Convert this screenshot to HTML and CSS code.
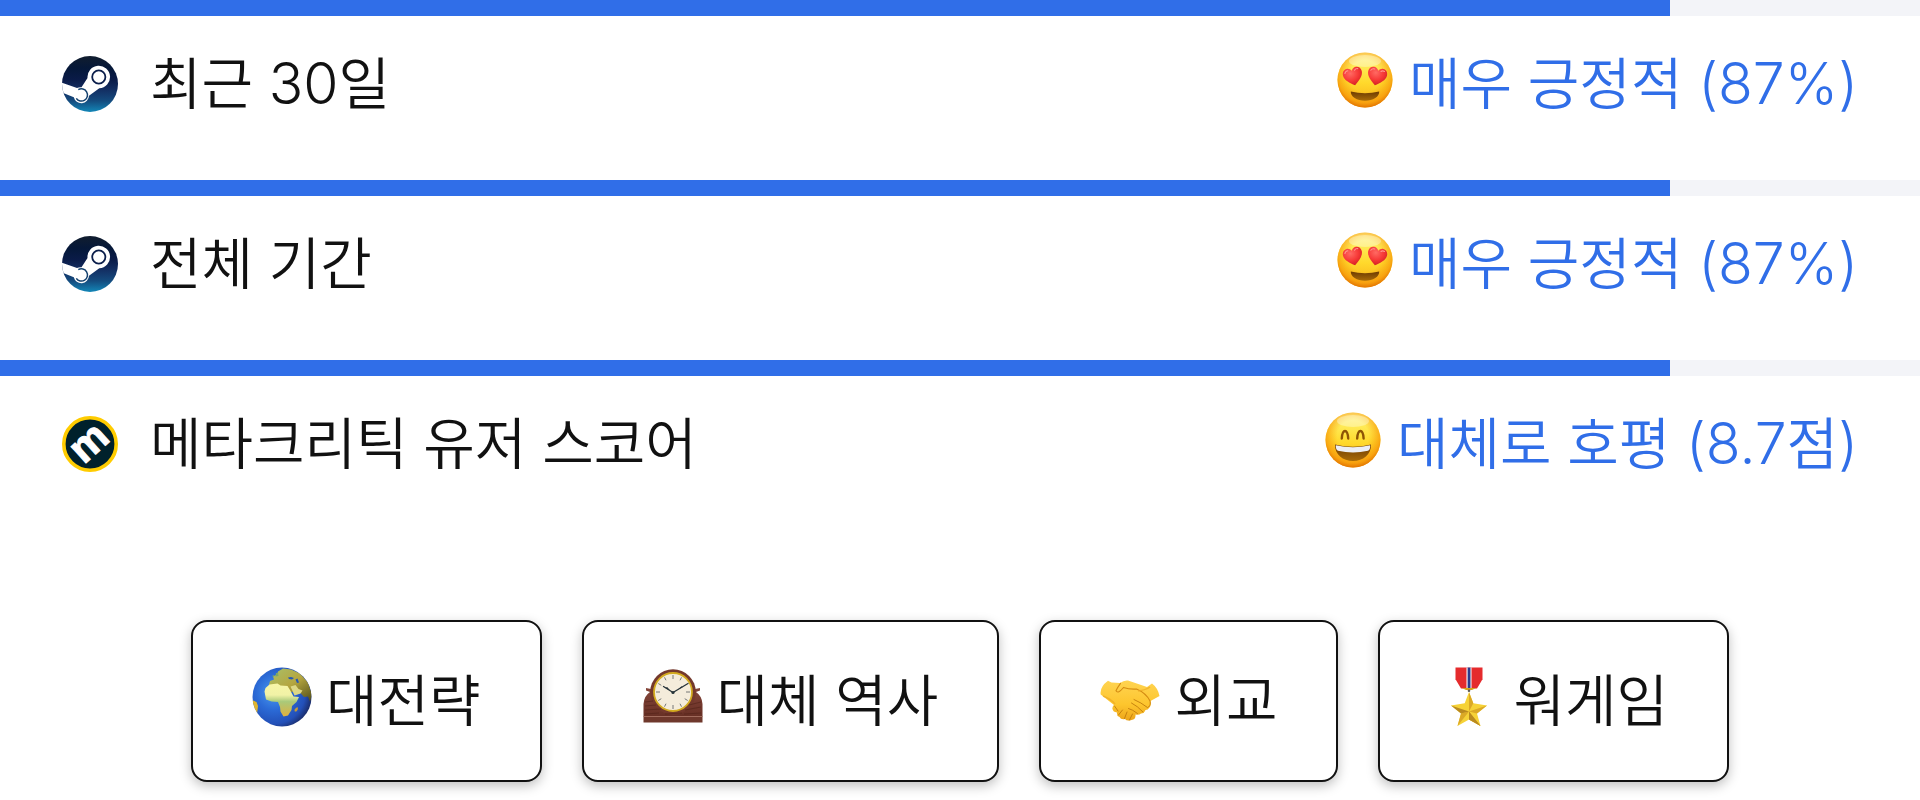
FILE: index.html
```html
<!DOCTYPE html>
<html lang="ko">
<head>
<meta charset="utf-8">
<meta name="viewport" content="width=device-width, initial-scale=1">
<title>게임 평가</title>
<link rel="stylesheet" href="styles.css">
</head>
<body>
<svg class="defs" aria-hidden="true">
  <defs>
    <linearGradient id="steam-bg" x1="0" y1="0" x2="0" y2="1">
      <stop offset="0" stop-color="#111d2e"/><stop offset=".22" stop-color="#051839"/><stop offset=".42" stop-color="#0a1b48"/><stop offset=".6" stop-color="#132e62"/><stop offset=".8" stop-color="#144b7e"/><stop offset="1" stop-color="#1387b8"/>
    </linearGradient>
    <linearGradient id="face-top" x1="0" y1="0" x2="0" y2="1">
      <stop offset="0" stop-color="#fff39a"/><stop offset=".25" stop-color="#ffea55"/><stop offset=".55" stop-color="#ffd92c"/><stop offset="1" stop-color="#f9ab16"/>
    </linearGradient>
    <radialGradient id="face-rim" cx=".5" cy=".43" r=".57">
      <stop offset=".5" stop-color="#f9a20c" stop-opacity="0"/><stop offset=".85" stop-color="#f79a0a" stop-opacity=".75"/><stop offset="1" stop-color="#e27402"/>
    </radialGradient>
    <radialGradient id="heart-fill" cx=".4" cy=".3" r=".8">
      <stop offset="0" stop-color="#ff6a63"/><stop offset=".5" stop-color="#f73a38"/><stop offset="1" stop-color="#c9181d"/>
    </radialGradient>
    <linearGradient id="mouth-fill" x1="0" y1="0" x2="0" y2="1">
      <stop offset="0" stop-color="#6d3b02"/><stop offset="1" stop-color="#a86a08"/>
    </linearGradient>
    <radialGradient id="sea" cx=".36" cy=".42" r=".66">
      <stop offset="0" stop-color="#4a9af0"/><stop offset=".45" stop-color="#2b6ad6"/><stop offset=".8" stop-color="#2350b8"/><stop offset="1" stop-color="#1a2a66"/>
    </radialGradient>
    <linearGradient id="africa" x1="0" y1="0" x2="0" y2="1">
      <stop offset="0" stop-color="#f7f5a8"/><stop offset=".35" stop-color="#f1f2a6"/><stop offset=".55" stop-color="#a9c97a"/><stop offset="1" stop-color="#e0b03e"/>
    </linearGradient>
    <linearGradient id="asia" x1="0" y1="0" x2="1" y2="1">
      <stop offset="0" stop-color="#a8c06a"/><stop offset=".5" stop-color="#b5a640"/><stop offset="1" stop-color="#4f4c18"/>
    </linearGradient>
    <linearGradient id="wood" x1="0" y1="0" x2="0" y2="1">
      <stop offset="0" stop-color="#85463a"/><stop offset="1" stop-color="#683025"/>
    </linearGradient>
    <linearGradient id="skin" x1="0" y1="0" x2="0" y2="1">
      <stop offset="0" stop-color="#ffd452"/><stop offset=".6" stop-color="#fdc52d"/><stop offset="1" stop-color="#eda51a"/>
    </linearGradient>
    <symbol id="steam" viewBox="0 0 56 56">
      <clipPath id="steam-clip"><circle cx="28" cy="28" r="28"/></clipPath>
      <g clip-path="url(#steam-clip)">
        <rect width="56" height="56" fill="url(#steam-bg)"/>
        <path d="M-1 26.500L15 32q2-1 4.500-.800L25.500 22a11.300 11.300 0 1 1 11.800 10.300L27 39.800a7.700 7.700 0 0 1-15.200 1.500L-1 36Z" fill="#fff"/>
        <circle cx="36.800" cy="21" r="6.600" fill="#fff" stroke="#0b1e4b" stroke-width="1.800"/>
        <path d="M16.300 33.700a6.100 6.100 0 1 1-2 8.600" fill="none" stroke="#15426f" stroke-width="1.500"/>
      </g>
    </symbol>
    <symbol id="metacritic" viewBox="0 0 56 56">
      <circle cx="28" cy="28" r="26.200" fill="#00212c" stroke="#ffcc00" stroke-width="3.600"/>
      <text class="logo-letter" x="28" y="39.500" text-anchor="middle" transform="rotate(-42 28 28)">m</text>
    </symbol>
    <symbol id="heart" viewBox="0 0 20 20">
      <path d="M10 18.500C5.500 15.300.8 11.500.8 6.800.8 3.600 3 1.600 5.500 1.600 7.500 1.600 9.200 2.700 10 4.500c.8-1.800 2.500-2.900 4.500-2.900 2.500 0 4.700 2 4.700 5.200 0 4.700-4.700 8.500-9.200 11.700Z" fill="url(#heart-fill)"/>
      <path d="M3 5.500Q4 3.200 6.400 3.500M12.700 4.500Q14 3 16 3.700" fill="none" stroke="#ffaaa2" stroke-width="1" stroke-linecap="round" opacity=".8"/>
    </symbol>
    <symbol id="heart-eyes" viewBox="0 0 60 60">
      <circle cx="30" cy="30" r="27.500" fill="url(#face-top)"/>
      <circle cx="30" cy="30" r="27.500" fill="url(#face-rim)"/>
      <ellipse cx="30" cy="11" rx="16" ry="6" fill="#fffce0" opacity=".4"/>
      <use href="#heart" x="7.500" y="16" width="21" height="21" transform="rotate(-13 18 26)"/>
      <use href="#heart" x="31.500" y="16" width="21" height="21" transform="rotate(13 42 26)"/>
      <path d="M15.800 41.500q14.200 3.500 28.400 0c.5 5-6.200 9.300-14.200 9.300s-14.700-4.300-14.200-9.300Z" fill="url(#mouth-fill)"/>
    </symbol>
    <symbol id="grin" viewBox="0 0 60 60">
      <circle cx="30" cy="30" r="27.500" fill="url(#face-top)"/>
      <circle cx="30" cy="30" r="27.500" fill="url(#face-rim)"/>
      <ellipse cx="30" cy="11" rx="16" ry="6" fill="#fffce0" opacity=".4"/>
      <path d="M18.800 28.500q.5-7.500 3.200-7.500t3.200 7.500M34.200 28.500q.5-7.500 3.200-7.500t3.200 7.500" fill="none" stroke="#8d5405" stroke-width="2.400" stroke-linecap="round"/>
      <path d="M12 34.500q18 4.500 36 0C48.500 44.500 40 51 30 51S11.500 44.500 12 34.500Z" fill="url(#mouth-fill)"/>
      <path d="M12.800 35.200q17.200 4.300 34.400 0 .3 4-2.200 5.600-15 3.500-30 0-2.500-1.600-2.200-5.600Z" fill="#eceef4"/>
    </symbol>
    <symbol id="globe" viewBox="0 0 60 60">
      <clipPath id="globe-clip"><circle cx="30" cy="30" r="29.500"/></clipPath>
      <g clip-path="url(#globe-clip)">
        <rect width="60" height="60" fill="url(#sea)"/>
        <path d="M17 17.500l1-3.500 4-1.500-1-3 4-2 1-3 5-3 8 1 9 4 8 9 4 12-2 7-2-5-4 .5-4.500-5-4-1-4 1-1.500 2.500-4-1.500-1-2.500 4-1-2-2-4 .5-2 3-2-3-4-1-3 3Z" fill="url(#asia)"/>
        <path d="M36 10.500l3-.5 3 1-2 1.500-3-.5Zm7.500 2 2-1 1.500 4-2 .5Z" fill="#2458b5"/>
        <path d="M12.500 24.500l1-3.500 4-3.500 8-1 3 2 7 .5 2.500 4 3.500 6.500 5.500.5-2.500 5-4.500 4-.5 4-3.500 5.500-4.500 1-3-5-.5-4.500-2-5-6.500-.5-5.500-2Z" fill="url(#africa)"/>
        <path d="M38.500 19.500l5-1.500 3 4 4 1.500-2 3-6 2Z" fill="#ddd784"/>
        <path d="M45.300 40q1.500 2-1 4.500-2.500.5-1.500-2.500Z" fill="#c79b35"/>
        <path d="M24 6l2 0 .5 3-3 .5ZM20 9l2-1v2Z" fill="#78a66b"/>
        <path d="M0 33l4.500 2 1.500 4-1 8-4-4Z" fill="#e1b52f"/>
      </g>
    </symbol>
    <symbol id="clock" viewBox="0 0 60 60">
      <path d="M3 21l5 1 4-1h36l4 1 5-1v2.500l-4 1.500q6 4 6.500 12v12H.5V37Q1 29 7 25L3 23.500Z" fill="url(#wood)"/>
      <circle cx="30" cy="25" r="22.800" fill="#74392d"/>
      <path d="M2 35l8-1M2 39l11-1M2 43l16-1M46 38l12-3M42 43l16-3M22 47l17-1M2 47l14-1M41 47l17-1" stroke="#54241a" stroke-width=".8" opacity=".8"/>
      <rect x=".5" y="49" width="59" height="6.500" fill="#6f382c"/>
      <path d="M.5 49.500h59" stroke="#a06a5b" stroke-width="1"/>
      <circle cx="30" cy="25" r="19" fill="#f4ecdb" stroke="#d3ab20" stroke-width="1.800"/>
      <path d="M30 8v4M30 38v4M13 25h4M43 25h4M21.500 10.300l1.500 3M38.500 10.300l-1.500 3M15.300 16.500l3 1.800M44.700 33.500l-3-1.800M15.300 33.500l3-1.800M21.500 39.700l1.500-3M38.500 39.700l-1.500-3" stroke="#555a5e" stroke-width=".8"/>
      <path d="M30 25.500L20.500 19.500M30 25.500L45 16.500" stroke="#27343a" stroke-width="1.300" stroke-linecap="round"/>
      <path d="M27 23.600l-5.500-3.200 3-.2ZM35 22.500l3.500-3.200 1 1Z" fill="#27343a"/>
      <circle cx="30" cy="25.500" r="1.600" fill="#27343a"/>
    </symbol>
    <symbol id="handshake" viewBox="0 0 60 60">
      <path d="M.7 27.500Q-.5 20 8 13.800L11.500 15.500 20 16Q24 13 28 13.500L47 20 52 16.500Q58 21 59.500 29L50.500 34Q51.500 38 49.500 40.500 48 43 45.500 43 44 46.500 41 46.500 39 48.500 35.500 47.500 36 52.500 31.500 53 27 54.500 25 52 21 53 19.500 50 16.500 49 17 45.500 13 45 12.500 42 12 40 14 38Z" fill="url(#skin)"/>
      <path d="M20.500 16.300q-3 4-4.500 7.500 2 3.500 7.500-3.300 6 2 13 1.500Q46 26 50 34q1 4-1.500 6" fill="none" stroke="#d48b12" stroke-width="1.100" stroke-linecap="round"/>
      <path d="M34 32.500q7 3 13.500 8M31.500 36q6 3 11.500 9M28.500 41.500q4 1 9 5M14.500 39l3.500 5M18.500 48l4-5M24.500 51.500l2.500-6.500M29.500 53l3-6" fill="none" stroke="#bf7a0c" stroke-width=".9" stroke-linecap="round"/>
      <path d="M38 24q8-1 12-4M3 29q8 3 12 8" fill="none" stroke="#edaa23" stroke-width="1.500" opacity=".7"/>
    </symbol>
    <symbol id="medal" viewBox="0 0 60 60">
      <path d="M16.500.5h27v11.800L38 21.500H22l-5.500-9.200Z" fill="#e52b2d"/>
      <path d="M27.500.5h5v21h-5Z" fill="#fff"/><path d="M28.600.5h2.900v21h-2.900Z" fill="#2b3a8c"/>
      <path d="M23 21h14l-4 2h-6Z" fill="#d4a41b"/><circle cx="30" cy="23.700" r="1.300" fill="#5b5a55"/>
      <path d="M30 25l4.300 11.300L48 38.500 38 46.500 41.500 59 30 52.500 18.500 59 22 46.500 12 38.500l13.700-2.200Z" fill="#f6d237"/>
      <path d="M30 25l4.300 11.300L30 44.500ZM48 38.500L38 46.500 30 44.500ZM41.500 59L30 52.500V44.500ZM18.500 59L22 46.500l8-2Z" fill="#dba926"/>
      <path d="M30 52.500V44.500L41.500 59ZM22 46.500l8-2-18-6Z" fill="#b98a20"/>
    </symbol>
  </defs>
</svg>
<main>
  <section class="ratings" aria-label="평가">
    <article class="rating">
      <div class="meter" role="progressbar" aria-label="최근 30일" aria-valuenow="87" aria-valuemin="0" aria-valuemax="100"><div class="meter-fill" style="width: 87%"></div></div>
      <div class="rating-row">
        <div class="source"><svg class="logo" aria-hidden="true"><use href="#steam"/></svg><span>최근 <span class="num">30</span>일</span></div>
        <div class="verdict"><svg class="emoji" aria-hidden="true"><use href="#heart-eyes"/></svg><span>매우 긍정적 <span class="num">(87%)</span></span></div>
      </div>
    </article>
    <article class="rating">
      <div class="meter" role="progressbar" aria-label="전체 기간" aria-valuenow="87" aria-valuemin="0" aria-valuemax="100"><div class="meter-fill" style="width: 87%"></div></div>
      <div class="rating-row">
        <div class="source"><svg class="logo" aria-hidden="true"><use href="#steam"/></svg><span>전체 기간</span></div>
        <div class="verdict"><svg class="emoji" aria-hidden="true"><use href="#heart-eyes"/></svg><span>매우 긍정적 <span class="num">(87%)</span></span></div>
      </div>
    </article>
    <article class="rating">
      <div class="meter" role="progressbar" aria-label="메타크리틱 유저 스코어" aria-valuenow="87" aria-valuemin="0" aria-valuemax="100"><div class="meter-fill" style="width: 87%"></div></div>
      <div class="rating-row">
        <div class="source"><svg class="logo" aria-hidden="true"><use href="#metacritic"/></svg><span>메타크리틱 유저 스코어</span></div>
        <div class="verdict"><svg class="emoji" aria-hidden="true"><use href="#grin"/></svg><span>대체로 호평 <span class="num">(8.7</span>점<span class="num">)</span></span></div>
      </div>
    </article>
  </section>
  <nav class="tags" aria-label="태그">
    <button class="tag" type="button"><svg class="emoji" aria-hidden="true"><use href="#globe"/></svg><span>대전략</span></button>
    <button class="tag" type="button"><svg class="emoji" aria-hidden="true"><use href="#clock"/></svg><span>대체 역사</span></button>
    <button class="tag" type="button"><svg class="emoji" aria-hidden="true"><use href="#handshake"/></svg><span>외교</span></button>
    <button class="tag" type="button"><svg class="emoji" aria-hidden="true"><use href="#medal"/></svg><span>워게임</span></button>
  </nav>
</main>
</body>
</html>
```

FILE: styles.css
```css
* {
  box-sizing: border-box;
}

body {
  margin: 0;
  background: #fff;
  color: #111;
  font-family: Inter, "Noto Sans CJK KR", sans-serif;
  font-size: 56px;
  font-weight: 350;
  line-height: 88px;
}

.defs {
  position: absolute;
  width: 0;
  height: 0;
}

.meter {
  height: 16px;
  background: #f3f4f8;
}

.meter-fill {
  height: 100%;
  background: #306ee8;
}

.rating-row {
  display: flex;
  justify-content: space-between;
  padding: 24px 62px 52px;
}

.source,
.verdict {
  display: flex;
  align-items: center;
  white-space: nowrap;
}

.source {
  gap: 32px;
}

.verdict {
  gap: 14px;
  color: #306ee8;
}

.num {
  font-size: 57px;
  font-weight: 300;
  line-height: 0;
}

.logo {
  width: 56px;
  height: 56px;
}

.logo-letter {
  fill: #fff;
  stroke: #fff;
  stroke-width: 1px;
  font: bold 42px "Liberation Sans", sans-serif;
}

.emoji {
  flex: none;
  width: 60px;
  height: 60px;
  margin-bottom: 8px;
}

.tags {
  display: flex;
  flex-wrap: wrap;
  justify-content: center;
  gap: 40px;
  padding: 80px 40px 16px;
}

.tag {
  display: flex;
  align-items: center;
  gap: 14px;
  padding: 35px 59px;
  border: 2px solid #111;
  border-radius: 16px;
  background: #fff;
  box-shadow: 0 4px 12px rgba(0, 0, 0, 0.25);
  color: inherit;
  font: inherit;
  white-space: nowrap;
}
```
